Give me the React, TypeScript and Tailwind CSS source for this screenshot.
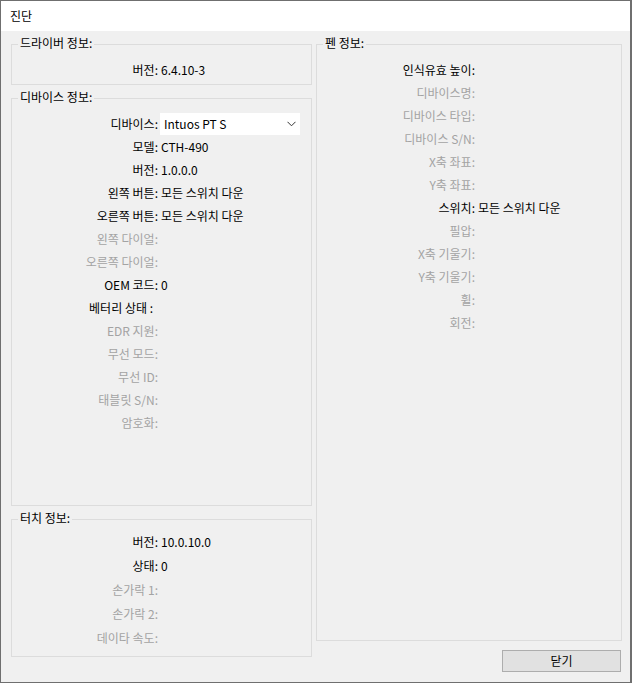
import { FC, ReactNode } from "react";

type RowProps = {
  label: string;
  value?: ReactNode;
  off?: boolean;
  w: string;
  h?: string;
};

// one static label + value pair, label right-aligned up to the colon
const Row: FC<RowProps> = ({ label, value, off, w, h = "h-[23px] leading-[23px]" }) => (
  <div className={`flex ${h}`}>
    <div className={`${w} shrink-0 text-right ${off ? "text-[#a3a3a3]" : "text-black"}`}>{label}</div>
    {value !== undefined && <div className="ml-[3px] text-black whitespace-nowrap">{value}</div>}
  </div>
);

const Group: FC<{ title: string; className: string; children?: ReactNode }> = ({ title, className, children }) => (
  <div className={`relative border border-[#dcdcdc] ${className}`}>
    <div className="absolute left-[6px] top-[-10px] px-[2px] bg-[#f0f0f0] leading-[16px] text-black">{title}</div>
    {children}
  </div>
);

const App: FC = () => {
  const L = "w-[146px]";
  const P = "w-[158px]";
  return (
    <div className="w-[632px] h-[683px] border-t border-l border-b border-r-2 border-[#6f6f6f] bg-[#f0f0f0] flex flex-col text-[12px] font-['Noto_Sans_CJK_KR',sans-serif] overflow-hidden">
      <div className="h-[30px] bg-white flex items-center pl-[9px] text-black leading-none">진단</div>
      <div className="flex gap-[4px] pt-[13px] pl-[10px]">
        <div className="w-[301px] flex flex-col gap-[13px]">
          <Group title="드라이버 정보:" className="h-[41px] pt-[13px]">
            <Row w={L} label="버전:" value="6.4.10-3" />
          </Group>

          <Group title="디바이스 정보:" className="h-[408px] pt-[13px]">
            <div className="flex h-[23px] items-center">
              <div className={`${L} shrink-0 text-right text-black leading-[23px]`}>디바이스:</div>
              <div className="ml-[2px] w-[140px] h-[22px] bg-white flex items-center justify-between pl-[4px] pr-[4px]">
                <span className="text-black">Intuos PT S</span>
                <svg width="9" height="6" viewBox="0 0 9 6" className="mr-[0px]">
                  <path d="M0.5 0.8 L4.5 4.8 L8.5 0.8" fill="none" stroke="#333" strokeWidth="1" />
                </svg>
              </div>
            </div>
            <Row w={L} label="모델:" value="CTH-490" />
            <Row w={L} label="버전:" value="1.0.0.0" />
            <Row w={L} label="왼쪽 버튼:" value="모든 스위치 다운" />
            <Row w={L} label="오른쪽 버튼:" value="모든 스위치 다운" />
            <Row w={L} label="왼쪽 다이얼:" off />
            <Row w={L} label="오른쪽 다이얼:" off />
            <Row w={L} label="OEM 코드:" value="0" />
            <div className="flex h-[23px] leading-[23px]">
              <div className={`${L} shrink-0 text-right text-black pr-[5px]`}>베터리 상태 :</div>
            </div>
            <Row w={L} label="EDR 지원:" off />
            <Row w={L} label="무선 모드:" off />
            <Row w={L} label="무선 ID:" off />
            <Row w={L} label="태블릿 S/N:" off />
            <Row w={L} label="암호화:" off />
          </Group>

          <Group title="터치 정보:" className="h-[138px] pt-[10px]">
            <Row w={L} h="h-[24px] leading-[24px]" label="버전:" value="10.0.10.0" />
            <Row w={L} h="h-[24px] leading-[24px]" label="상태:" value="0" />
            <Row w={L} h="h-[24px] leading-[24px]" label="손가락 1:" off />
            <Row w={L} h="h-[24px] leading-[24px]" label="손가락 2:" off />
            <Row w={L} h="h-[24px] leading-[24px]" label="데이타 속도:" off />
          </Group>
        </div>

        <div className="w-[306px] flex flex-col">
          <Group title="펜 정보:" className="h-[597px] pt-[13px]">
            <Row w={P} label="인식유효 높이:" />
            <Row w={P} label="디바이스명:" off />
            <Row w={P} label="디바이스 타입:" off />
            <Row w={P} label="디바이스 S/N:" off />
            <Row w={P} label="X축 좌표:" off />
            <Row w={P} label="Y축 좌표:" off />
            <Row w={P} label="스위치:" value="모든 스위치 다운" />
            <Row w={P} label="필압:" off />
            <Row w={P} label="X축 기울기:" off />
            <Row w={P} label="Y축 기울기:" off />
            <Row w={P} label="휠:" off />
            <Row w={P} label="회전:" off />
          </Group>
          <button className="self-end mr-[1px] mt-[9px] w-[119px] h-[22px] bg-[#e1e1e1] border border-[#adadad] text-black leading-none">
            닫기
          </button>
        </div>
      </div>
    </div>
  );
};

export default App;
